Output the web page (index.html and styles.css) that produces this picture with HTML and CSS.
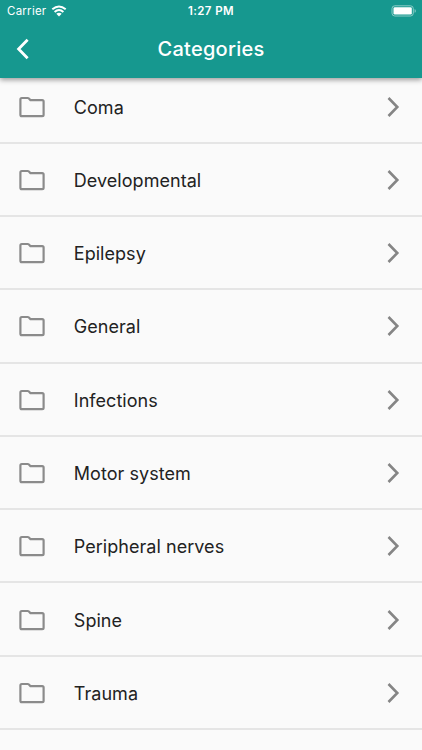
FILE: index.html
```
<!DOCTYPE html>
<html lang="en">
<head>
<meta charset="utf-8">
<title>Categories</title>
<link rel="stylesheet" href="styles.css">
</head>
<body>
<svg width="0" height="0" class="defs" aria-hidden="true">
  <symbol id="folder" viewBox="0 0 28 24"><path d="M3.8 3H9.6Q10.4 3 10.9 3.5L12.4 5.1H24.2Q25.6 5.1 25.6 6.5V19.8Q25.6 21.2 24.2 21.2H3.8Q2.4 21.2 2.4 19.8V4.4Q2.4 3 3.8 3Z"/></symbol>
  <symbol id="chevron" viewBox="0 0 14 22"><path d="M2.5 2L11.3 11L2.5 20"/></symbol>
</svg>
<header class="appbar">
  <div class="status">
    <div class="carrier"><span>Carrier</span>
      <svg class="wifi" viewBox="0 0 16 12"><path d="M1.3 4.3Q8 -1.3 14.7 4.3M3.6 6.9Q8 3.1 12.4 6.9"/><path class="dot" d="M5.3 8.8Q8 6.8 10.7 8.8L8 11.6Z"/></svg>
    </div>
    <span class="time">1:27 PM</span>
    <svg class="battery" viewBox="0 0 26 12"><rect class="case" x="1" y=".8" width="21.3" height="10.2" rx="2.8"/><rect class="level" x="2.5" y="2.3" width="18.3" height="7.2" rx="1.3"/><path class="cap" d="M23.6 4Q24.8 4.6 24.8 5.9T23.6 7.8Z"/></svg>
  </div>
  <div class="toolbar">
    <svg class="back" viewBox="0 0 14 22"><path d="M11.6 1.8L2.6 11L11.6 20.2"/></svg>
    <h1>Categories</h1>
  </div>
</header>
<ul class="list">
  <li><svg class="folder"><use href="#folder"/></svg><span>Coma</span><svg class="chevron"><use href="#chevron"/></svg></li>
  <li><svg class="folder"><use href="#folder"/></svg><span>Developmental</span><svg class="chevron"><use href="#chevron"/></svg></li>
  <li><svg class="folder"><use href="#folder"/></svg><span>Epilepsy</span><svg class="chevron"><use href="#chevron"/></svg></li>
  <li><svg class="folder"><use href="#folder"/></svg><span>General</span><svg class="chevron"><use href="#chevron"/></svg></li>
  <li><svg class="folder"><use href="#folder"/></svg><span>Infections</span><svg class="chevron"><use href="#chevron"/></svg></li>
  <li><svg class="folder"><use href="#folder"/></svg><span>Motor system</span><svg class="chevron"><use href="#chevron"/></svg></li>
  <li><svg class="folder"><use href="#folder"/></svg><span>Peripheral nerves</span><svg class="chevron"><use href="#chevron"/></svg></li>
  <li><svg class="folder"><use href="#folder"/></svg><span>Spine</span><svg class="chevron"><use href="#chevron"/></svg></li>
  <li><svg class="folder"><use href="#folder"/></svg><span>Trauma</span><svg class="chevron"><use href="#chevron"/></svg></li>
</ul>
</body>
</html>
```
FILE: styles.css
```
* { box-sizing: border-box; }
body {
  margin: 0;
  height: 750px;
  overflow: hidden;
  background: #fafafa;
  color: #222;
  font-family: Inter, "Liberation Sans", sans-serif;
}
svg { display: block; fill: none; flex: none; }
.defs { position: absolute; }
.appbar {
  position: relative;
  z-index: 1;
  height: 78px;
  background: #16988f;
  color: #fff;
  box-shadow: 0 2px 5px rgba(0, 0, 0, .38);
}
.status {
  display: grid;
  grid-template-columns: 1fr auto 1fr;
  align-items: center;
  height: 22px;
  padding: 0 5px 0 7px;
  font-size: 11.5px;
}
.carrier { display: flex; align-items: center; gap: 4.5px; letter-spacing: .25px; }
.wifi { width: 16px; height: 12px; stroke: #fff; stroke-width: 2; }
.wifi .dot { fill: #fff; stroke: none; }
.time { font-weight: 600; letter-spacing: .4px; margin-right: 2px; }
.battery { width: 26px; height: 12px; justify-self: end; }
.case { stroke: #8accc7; stroke-width: 1; }
.level { fill: #fff; }
.cap { fill: #8accc7; }
.toolbar {
  display: grid;
  grid-template-columns: 46px 1fr 46px;
  align-items: center;
  height: 54px;
}
.back { width: 14px; height: 22px; margin-left: 16px; stroke: #fff; stroke-width: 2.8; }
h1 {
  margin: 0;
  text-align: center;
  font-size: 20px;
  line-height: 24px;
  font-weight: 500;
  letter-spacing: .25px;
}
.list { margin: -7.6px 0 0; padding: 0; list-style: none; }
.list li {
  display: flex;
  align-items: center;
  height: 73.3px;
  border-bottom: 2px solid #e5e5e5;
  padding: 1px 22px 0 18px;
  font-size: 18px;
  letter-spacing: .04px;
}
.list span { flex: 1; margin-left: 27.8px; padding-top: 1px; }
.folder { width: 28px; height: 24px; stroke: #8b8b8b; stroke-width: 2.2; }
.chevron { width: 14px; height: 22px; stroke: #858585; stroke-width: 2.6; }
```
